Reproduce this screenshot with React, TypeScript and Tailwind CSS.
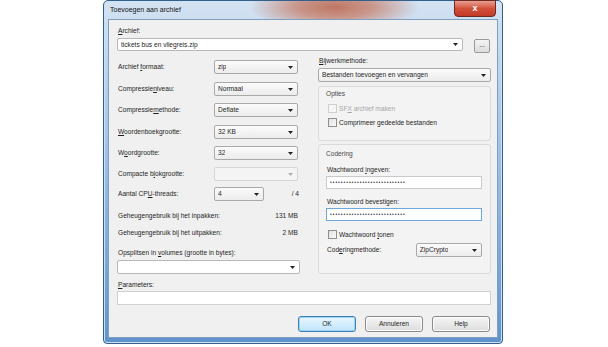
import React from 'react';

const font = { fontFamily: '"Liberation Sans", Arial, sans-serif' };

function Arrow({ disabled }: { disabled?: boolean }) {
  return (
    <svg width="5" height="3" viewBox="0 0 5 3" className="shrink-0">
      <path d="M0 0H5L2.5 3Z" fill={disabled ? '#b0b0b0' : '#222'} />
    </svg>
  );
}

function Combo({
  value,
  className = '',
  disabled,
  white,
}: {
  value?: string;
  className?: string;
  disabled?: boolean;
  white?: boolean;
}) {
  return (
    <div
      className={`flex h-[14px] items-center justify-between rounded-[2px] border pl-[3px] pr-[4px] ${
        disabled
          ? 'border-[#d6d6d6] bg-[#f4f4f4]'
          : white
            ? 'border-[#b8b8b8] bg-white'
            : 'border-[#a9a9a9] bg-gradient-to-b from-[#fbfbfb] to-[#ececec]'
      } ${className}`}
    >
      <span className="truncate">{value}</span>
      <Arrow disabled={disabled} />
    </div>
  );
}

function Check({ label, disabled }: { label: React.ReactNode; disabled?: boolean }) {
  return (
    <div className={`flex items-center gap-[2px] ${disabled ? 'text-[#a8a8a8]' : ''}`}>
      <div
        className={`h-[9px] w-[9px] border ${
          disabled ? 'border-[#cfcfcf] bg-[#f6f6f6]' : 'border-[#8e8f8f] bg-gradient-to-br from-[#e2e2e2] to-[#fafafa]'
        }`}
      />
      <span>{label}</span>
    </div>
  );
}

function Button({ label, primary }: { label: string; primary?: boolean }) {
  return (
    <div
      className={`flex h-[16px] w-[58px] items-center justify-center rounded-[3px] border ${
        primary
          ? 'border-[#3c7fb1] bg-gradient-to-b from-[#eaf6fd] to-[#bee6fd] shadow-[inset_0_0_0_1px_#9fd5f5]'
          : 'border-[#8a8a8a] bg-gradient-to-b from-[#f6f6f6] to-[#dddddd] shadow-[inset_0_0_0_1px_#fcfcfc]'
      }`}
    >
      {label}
    </div>
  );
}

const leftRows: { label: React.ReactNode; value?: string; mt: string; disabled?: boolean }[] = [
  { label: <>Archief <u>f</u>ormaat:</>, value: 'zip', mt: 'mt-0' },
  { label: <>Compressie<u>n</u>iveau:</>, value: 'Normaal', mt: 'mt-[8px]' },
  { label: <>Compressie<u>m</u>ethode:</>, value: 'Deflate', mt: 'mt-[7px]' },
  { label: <><u>W</u>oordenboekgrootte:</>, value: '32 KB', mt: 'mt-[8px]' },
  { label: <>W<u>o</u>ordgrootte:</>, value: '32', mt: 'mt-[7px]' },
  { label: <>Compacte b<u>l</u>okgrootte:</>, value: '', mt: 'mt-[7px]', disabled: true },
];

const dots = '•'.repeat(28);

export default function App() {
  return (
    <div className="h-[347px] w-[608px] overflow-hidden bg-white text-[6.6px] leading-[8px] text-[#1f1f1f]" style={font}>
      <div className="ml-[103px] flex h-[344px] w-[400px] flex-col rounded-t-[5px] rounded-b-[4px] border border-[#34608c] bg-gradient-to-b from-[#d4e3f3] via-[#98bce4] to-[#5f93cf] px-[4px] pb-[5px] shadow-[inset_0_0_0_1px_#cfe0f2]">
        {/* title bar */}
        <div className="relative flex h-[18px] items-center bg-[radial-gradient(ellipse_85px_24px_at_58%_35%,#bf7663_0%,#c9978c_45%,transparent_100%)]">
          <span className="pl-[2px] text-[7px] text-[#111]">Toevoegen aan archief</span>
          <div className="absolute right-[2px] top-[-1px] flex h-[17px] w-[42px] items-center justify-center rounded-b-[4px] border border-[#6b2a22] bg-gradient-to-b from-[#e8a093] via-[#d2503b] to-[#c23a26]">
            <span className="text-[9px] font-bold leading-none text-white">x</span>
          </div>
        </div>

        {/* client */}
        <div className="flex flex-1 flex-col border border-[#7f9fc0] bg-[#f0f0f0] pl-[8px] pt-[7px]">
          <div className="pl-[1px]">
            <u>A</u>rchief:
          </div>
          <div className="mt-[3px] flex items-start">
            <Combo value="tickets bus en vliegreis.zip" white className="w-[346px] !h-[13px]" />
            <div className="ml-[11px] mt-[1px] h-[14px] w-[16px] rounded-[2px] border border-[#9a9a9a] bg-gradient-to-b from-[#f4f4f4] to-[#dcdcdc] text-center leading-[10px]">
              ...
            </div>
          </div>

          <div className="mt-[7px] flex">
            {/* left column */}
            <div className="flex w-[183px] flex-col">
              {leftRows.map((r, i) => (
                <div key={i} className={`flex h-[14px] items-center ${r.mt}`}>
                  <span className="w-[97px] pl-[1px]">{r.label}</span>
                  <Combo value={r.value} disabled={r.disabled} className="w-[84px]" />
                </div>
              ))}
              <div className="mt-[6px] flex h-[14px] items-center">
                <span className="w-[97px] pl-[1px]">
                  Aantal CP<u>U</u>-threads:
                </span>
                <Combo value="4" className="w-[50px]" />
                <span className="ml-auto pr-[1px]">/ 4</span>
              </div>
              <div className="mt-[11px] flex justify-between pl-[1px] pr-[2px]">
                <span>Geheugengebruik bij het inpakken:</span>
                <span>131 MB</span>
              </div>
              <div className="mt-[9px] flex justify-between pl-[1px] pr-[2px]">
                <span>Geheugengebruik bij het uitpakken:</span>
                <span>2 MB</span>
              </div>
              <div className="mt-[12px] pl-[1px]">
                Opsplitsen in <u>v</u>olumes (grootte in bytes):
              </div>
              <Combo white className="mt-[3px] w-[183px]" />
            </div>

            {/* right column */}
            <div className="ml-[18px] flex w-[173px] flex-col">
              <div className="mt-[-3px] pl-[1px]">
                <u>B</u>ijwerkmethode:
              </div>
              <Combo value="Bestanden toevoegen en vervangen" className="mt-[3px] w-[173px]" />

              <div className="mt-[4px] flex h-[55px] flex-col rounded-[3px] border border-[#dadada] bg-[#f3f3f3] pl-[7px] pt-[3px]">
                <span className="text-[#4a4a4a]">Opties</span>
                <div className="mt-[6px] pl-[2px]">
                  <Check disabled label={<>SF<u>X</u> archief maken</>} />
                </div>
                <div className="mt-[5px] pl-[2px]">
                  <Check label={<>Comprimeer <u>g</u>edeelde bestanden</>} />
                </div>
              </div>

              <div className="mt-[3px] flex h-[130px] flex-col rounded-[3px] border border-[#dadada] bg-[#f3f3f3] pl-[7px] pr-[8px] pt-[5px]">
                <span className="text-[#4a4a4a]">Codering</span>
                <span className="mt-[8px] pl-[1px]">
                  Wachtwoord <u>i</u>ngeven:
                </span>
                <div className="mt-[2px] flex h-[13px] items-center border border-[#c9c9c9] bg-white pl-[3px]">
                  <span className="text-[5px] leading-none tracking-[0.95px] text-[#333]">{dots}</span>
                </div>
                <span className="mt-[9px] pl-[1px]">Wachtwoord bevestigen:</span>
                <div className="mt-[2px] flex h-[13px] items-center border border-[#6fa6dc] bg-white pl-[3px]">
                  <span className="text-[5px] leading-none tracking-[0.95px] text-[#333]">{dots}</span>
                </div>
                <div className="mt-[9px] pl-[2px]">
                  <Check label={<>Wachtwoord <u>t</u>onen</>} />
                </div>
                <div className="mt-[4px] flex h-[14px] items-center">
                  <span className="w-[91px] pl-[1px]">
                    Cod<u>e</u>ringmethode:
                  </span>
                  <Combo value="ZipCrypto" className="w-[67px]" />
                </div>
              </div>
            </div>
          </div>

          <div className="mt-[7px] pl-[1px]">
            <u>P</u>arameters:
          </div>
          <div className="mt-[2px] h-[14px] w-[374px] border border-[#d0d0d0] bg-white" />

          <div className="mt-[11px] flex w-[374px] justify-end gap-[9px] pr-[1px]">
            <Button label="OK" primary />
            <Button label="Annuleren" />
            <Button label="Help" />
          </div>
        </div>
      </div>
    </div>
  );
}
